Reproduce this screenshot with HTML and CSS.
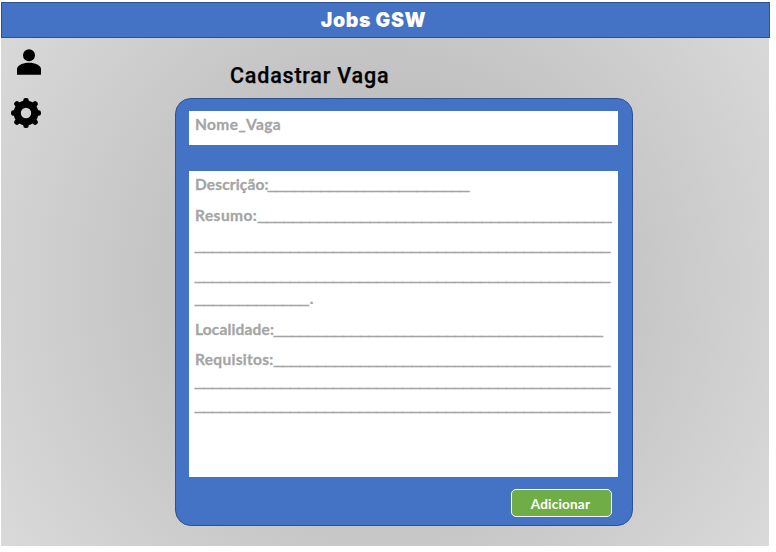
FILE: index.html
```html
<!DOCTYPE html>
<html lang="pt-BR">
<head>
<meta charset="utf-8">
<title>Jobs GSW</title>
<link rel="stylesheet" href="styles.css">
</head>
<body>
<div class="app">
  <header class="topbar"><h1 class="brand">Jobs GSW</h1></header>
  <div class="content">
    <nav class="sidebar">
      <svg class="icon-user" width="24" height="26" viewBox="0 0 24 26"><circle cx="12" cy="6.2" r="6"/><path d="M0 25.7V20C0 16.500 6 13.800 12 13.800S24 16.500 24 20V25.700Z"/></svg>
      <svg class="icon-gear" width="30" height="30" viewBox="-15 -15 30 30"><rect x="-2.700" y="-15" width="5.400" height="30" rx="2.300"/><rect x="-15" y="-2.700" width="30" height="5.400" rx="2.300"/><g transform="rotate(45)"><rect x="-2.700" y="-15.500" width="5.400" height="31" rx="2.300"/><rect x="-15.500" y="-2.700" width="31" height="5.400" rx="2.300"/></g><circle r="12.400"/><circle class="hole" r="5.200"/></svg>
    </nav>
    <main class="main">
      <h2 class="title">Cadastrar Vaga</h2>
      <section class="card">
        <div class="name-field">Nome_Vaga</div>
        <div class="details">
          <div class="row"><span class="label descricao">Descrição:</span><span class="rule spaced">_______________________</span></div>
          <div class="row gap-l"><span class="label resumo">Resumo:</span><span class="rule tight">_________________________________________</span></div>
          <div class="row gap-m"><span class="rule">________________________________________________</span></div>
          <div class="row gap-m"><span class="rule">________________________________________________</span></div>
          <div class="row gap-s"><span class="rule spaced">_____________</span><span class="label stop">.</span></div>
          <div class="row gap-l"><span class="label wide">Localidade:</span><span class="rule">______________________________________</span></div>
          <div class="row gap-m"><span class="label wide requisitos">Requisitos:</span><span class="rule tight">_______________________________________</span></div>
          <div class="row gap-xs"><span class="rule">________________________________________________</span></div>
          <div class="row gap-sm"><span class="rule">________________________________________________</span></div>
        </div>
        <button class="add" type="button">Adicionar</button>
      </section>
    </main>
  </div>
</div>
</body>
</html>
```
FILE: styles.css
```css
* { box-sizing: border-box; }
body { margin: 0; background: #fff; }
.app { width: 769px; height: 544px; margin: 2px 0 0 1px; display: flex; flex-direction: column; }
.topbar { height: 36px; background: #4472c4; border: 1px solid #2f528f; display: flex; justify-content: center; padding-right: 24px; }
.brand { margin: 0; font: 900 19.5px/35px Inter, sans-serif; letter-spacing: 0.6px; color: #fff; white-space: nowrap; }
.content { width: 768px; flex: 1; display: flex; background: radial-gradient(circle 470px at 50% 48%, #b0b0b0, #dadada); }
.sidebar { width: 174px; padding: 11px 0 0 10px; display: flex; flex-direction: column; align-items: flex-start; }
.icon-user { margin-left: 6px; }
.icon-gear { margin-top: 23px; }
.icon-gear .hole { fill: #d1d1d1; }
.main { width: 458px; }
.title { margin: 0; height: 60px; padding: 22px 0 0 55px; font: 500 21.5px/31px Roboto, sans-serif; letter-spacing: 0.8px; -webkit-text-stroke: 0.25px #000; color: #000; white-space: nowrap; }
.card { height: 428px; border: 1px solid #2f528f; border-radius: 16px; background: #4472c4; padding: 12px 14px 0 13px; display: flex; flex-direction: column; }
.name-field { height: 34px; background: #fff; padding: 3px 6px; font: 700 15.5px/20px Lato, sans-serif; letter-spacing: 0.38px; -webkit-text-stroke: 0.3px #a5a5a5; color: #a5a5a5; }
.details { height: 306px; margin-top: 26px; background: #fff; padding: 4px 6px; color: #a5a5a5; }
.row { height: 20px; display: flex; line-height: 20px; white-space: nowrap; }
.label { font: 700 15.5px/18px Lato, sans-serif; letter-spacing: 0.15px; -webkit-text-stroke: 0.3px #a5a5a5; }
.descricao { width: 73px; }
.resumo { width: 63px; letter-spacing: 0.45px; }
.wide { width: 79px; }
.requisitos { letter-spacing: 0.3px; }
.stop { padding-left: 1px; }
.rule { font: 700 15.55px/20px "Liberation Sans", sans-serif; -webkit-text-stroke: 0.9px #a5a5a5; }
.spaced { letter-spacing: 0.1px; }
.tight { letter-spacing: -0.03px; }
.gap-l { margin-top: 11px; }
.gap-m { margin-top: 10px; }
.gap-sm { margin-top: 4px; }
.gap-s { margin-top: 3px; }
.gap-xs { margin-top: 2px; }
.add { width: 101px; height: 28px; margin: 12px 6px 0 0; padding: 2px 2px 0 0; align-self: flex-end; border: 1px solid #fff; border-radius: 5px; background: #70ad47; font: 700 13.5px/20px Lato, sans-serif; letter-spacing: 0.2px; color: #fff; }
```
